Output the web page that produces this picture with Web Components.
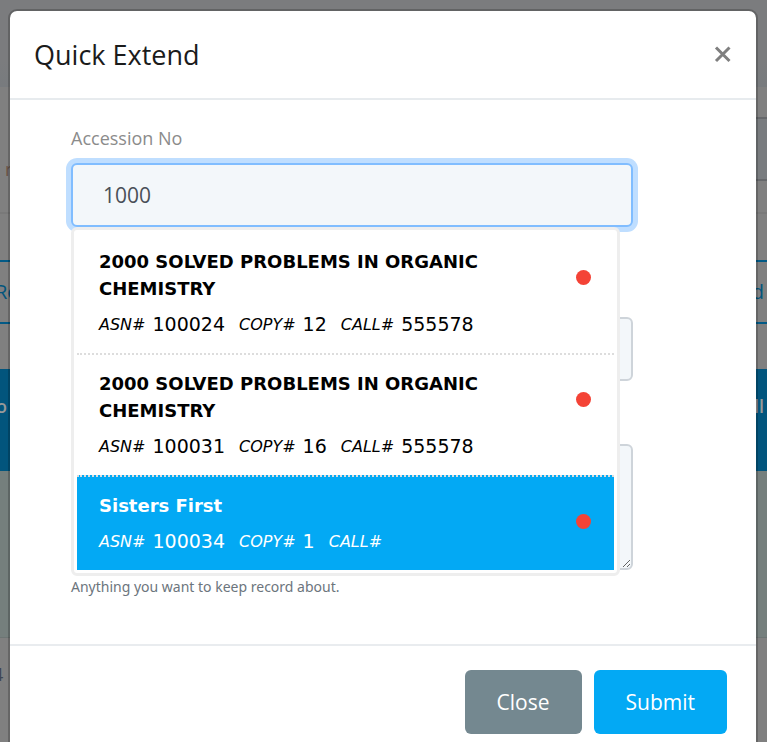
<!DOCTYPE html>
<html lang="en">
<head>
<meta charset="utf-8">
<title>Quick Extend</title>
<style>
body { margin: 0; font-family: "Open Sans", "Noto Sans", sans-serif; }
</style>
</head>
<body>
<app-shell>
  <page-backdrop slot="page"></page-backdrop>
  <modal-dialog heading="Quick Extend">
    <form-field caption="Accession No" value="1000" focused gap="wide">
      <suggest-list>
        <suggest-item heading="2000 SOLVED PROBLEMS IN ORGANIC CHEMISTRY" asn="100024" copy="12" call="555578"></suggest-item>
        <suggest-item heading="2000 SOLVED PROBLEMS IN ORGANIC CHEMISTRY" asn="100031" copy="16" call="555578"></suggest-item>
        <suggest-item heading="Sisters First" asn="100034" copy="1" call="" active></suggest-item>
      </suggest-list>
    </form-field>
    <form-field></form-field>
    <form-field multiline help="Anything you want to keep record about."></form-field>
    <action-button slot="actions" kind="secondary">Close</action-button>
    <action-button slot="actions">Submit</action-button>
  </modal-dialog>
</app-shell>
<script>
class AppShell extends HTMLElement {
  constructor() {
    super();
    this.attachShadow({ mode: 'open' }).innerHTML = `
      <style>
        :host { display: grid; grid-template: 100vh / minmax(0, 1fr); overflow: hidden; }
        ::slotted(*) { grid-area: 1 / 1; }
      </style>
      <slot name="page"></slot><slot></slot>`;
  }
}

class PageBackdrop extends HTMLElement {
  constructor() {
    super();
    this.attachShadow({ mode: 'open' }).innerHTML = `
      <style>
        :host { display: flex; flex-direction: column; overflow: hidden; background: #808080; font-size: 20px; }
        div { display: flex; justify-content: space-between; align-items: center; box-sizing: border-box; flex: none; overflow: hidden; }
        .top { height: 87px; background: linear-gradient(#7b7c7e 70%, #787b7e); }
        .filter { height: 127px; border-bottom: 2px solid #797979; padding-top: 30px; align-items: stretch; }
        .filter span { color: #6a5244; padding: 40px 0 0 5px; font-size: 18px; }
        .filter i { width: 11px; height: 64px; border: solid #66686b; border-width: 2px 0; background: #797c7f; box-sizing: border-box; }
        .tools { height: 155px; padding: 45px 0; }
        .tools div { flex: 1; height: 64px; border: solid #025a86; border-width: 2px 0; color: #02557d; padding-right: 3px; }
        .tools span:first-child { margin-left: -5px; }
        .head { height: 102px; background: #02557d; color: #999; font-weight: 600; font-size: 18px; padding: 0 3px 28px 0; }
        .head span:first-child { margin-left: -4px; }
        .row { height: 167px; background: #757f7d; border-bottom: 1px solid #6d7574; }
        .next { flex: 1; align-items: flex-start; padding-top: 24px; color: #3f4654; font-size: 18px; }
        .next span { margin-left: -7px; }
      </style>
      <div class="top"></div>
      <div class="filter"><span>r</span><i></i></div>
      <div class="tools"><div><span>Re</span><span>d</span></div></div>
      <div class="head"><span>o</span><span>ll</span></div>
      <div class="row"></div>
      <div class="next"><span>4</span></div>`;
  }
}

class ModalDialog extends HTMLElement {
  connectedCallback() {
    this.attachShadow({ mode: 'open' }).innerHTML = `
      <style>
        :host { display: block; margin: 9px 9px 0 8px; min-height: 100vh; box-sizing: border-box; background: #fff; background-clip: padding-box;
          border: 2px solid rgba(0,0,0,.2); border-radius: 9px; }
        header { display: flex; justify-content: space-between; align-items: center; height: 87px; padding: 0 24px; border-bottom: 2px solid #e7ebee; }
        h1 { margin: 0; font-size: 27px; font-weight: 400; line-height: 40px; color: #1b1b1b; }
        button { display: flex; padding: 0; border: 0; background: none; color: #7f7f7f; }
        main { padding: 21px 123px 45px 61px; }
        footer { display: flex; justify-content: flex-end; gap: 12px; padding: 24px 29px; border-top: 2px solid #e9ecef; }
      </style>
      <header><h1></h1>
        <button type="button" aria-label="Close dialog"><svg width="20" height="20" viewBox="0 0 20 20" fill="none" stroke="currentColor" stroke-width="3"><path d="M4 2.500 17.500 16M17.500 2.500 4 16"/></svg></button>
      </header>
      <main><slot></slot></main>
      <footer><slot name="actions"></slot></footer>`;
    this.shadowRoot.querySelector('h1').textContent = this.getAttribute('heading');
  }
}

class FormField extends HTMLElement {
  connectedCallback() {
    const caption = this.getAttribute('caption');
    const help = this.getAttribute('help');
    const multi = this.hasAttribute('multiline');
    this.attachShadow({ mode: 'open' }).innerHTML = `
      <style>
        :host { display: block; padding-bottom: 27px; }
        :host([gap]) { padding-bottom: 54px; }
        :host([help]) { padding-bottom: 0; }
        label, .space { display: block; height: 34px; line-height: 34px; padding-bottom: 8px; font-size: 18px; color: #8b8b8b; }
        .space { height: 28px; }
        .wrap { position: relative; }
        .control { display: block; width: 100%; height: 64px; box-sizing: border-box; margin: 0; padding: 0 30px; border: 2px solid #ced4da; border-radius: 6px;
          background: #f3f7fa; color: #495057; font: 21px "Open Sans", "Noto Sans", sans-serif; outline: 0; }
        textarea.control { height: 126px; padding: 15px 30px; }
        :host([focused]) .control { border-color: #80bdff; box-shadow: 0 0 0 5px #bfdeff; }
        small { display: block; padding-top: 5px; font: 14px/24px "Noto Sans", "Open Sans", sans-serif; color: #6c757d; }
      </style>
      ${caption ? `<label for="control">${caption}</label>` : '<div class="space"></div>'}
      <div class="wrap">
        ${multi ? '<textarea class="control" id="control" aria-label="Remarks" aria-describedby="help"></textarea>'
                : '<input class="control" id="control" type="text">'}
        <slot></slot>
      </div>
      ${help ? `<small id="help">${help}</small>` : ''}`;
    const control = this.shadowRoot.getElementById('control');
    if (!multi) control.value = this.getAttribute('value') || '';
    if (!caption && !multi) control.setAttribute('aria-label', 'Extend until');
  }
}

class SuggestList extends HTMLElement {
  constructor() {
    super();
    this.attachShadow({ mode: 'open' }).innerHTML = `
      <style>
        :host { display: block; position: absolute; z-index: 1; top: 100%; left: 0; right: 13px; padding: 3px; border: 3px solid #eee; border-radius: 6px;
          background: #fff; color: #000; font-family: Verdana, "DejaVu Sans", sans-serif; }
      </style><slot></slot>`;
    this.setAttribute('role', 'listbox');
  }
}

class SuggestItem extends HTMLElement {
  connectedCallback() {
    this.attachShadow({ mode: 'open' }).innerHTML = `
      <style>
        :host { display: flex; align-items: flex-start; gap: 24px; padding: 15px 23px 15px 22px; line-height: 27px; border-top: 2px dotted #ddd; }
        :host(:first-child) { border-top: 0; }
        :host([active]) { background: #03a9f4; color: #fff; }
        .text { flex: 1; min-width: 0; }
        b { display: block; font-size: 18px; margin-bottom: 9px; }
        p { display: flex; margin: 0; gap: 14px; height: 27px; font-size: 19px; white-space: nowrap; }
        span { display: flex; gap: 7px; }
        i { font-size: 16px; }
        .dot { flex: none; width: 15px; height: 15px; margin-top: 22px; border-radius: 50%; background: #f44336; }
      </style>
      <div class="text"><b></b><p></p></div><div class="dot"></div>`;
    const get = name => this.getAttribute(name);
    this.setAttribute('role', 'option');
    this.shadowRoot.querySelector('b').textContent = get('heading');
    this.shadowRoot.querySelector('p').innerHTML =
      ['asn', 'copy', 'call'].map(k => `<span><i>${k.toUpperCase()}#</i> ${get(k)}</span>`).join('');
  }
}

class ActionButton extends HTMLElement {
  constructor() {
    super();
    this.attachShadow({ mode: 'open' }).innerHTML = `
      <style>
        :host { display: block; }
        button { display: block; height: 64px; padding: 0 32px; border: 0; border-radius: 6px; background: #03a9f4; color: #fff;
          font: 21px "Open Sans", "Noto Sans", sans-serif; }
        :host([kind="secondary"]) button { background: #748890; }
      </style>
      <button type="button"><slot></slot></button>`;
  }
}

customElements.define('app-shell', AppShell);
customElements.define('page-backdrop', PageBackdrop);
customElements.define('modal-dialog', ModalDialog);
customElements.define('form-field', FormField);
customElements.define('suggest-list', SuggestList);
customElements.define('suggest-item', SuggestItem);
customElements.define('action-button', ActionButton);
</script>
</body>
</html>
